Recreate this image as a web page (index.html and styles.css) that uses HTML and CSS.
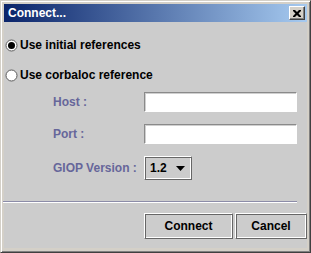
FILE: index.html
```html
<!DOCTYPE html>
<html lang="en">
<head>
    <meta charset="UTF-8">
    <title>Connect...</title>
    <link rel="stylesheet" href="styles.css">
</head>
<body>
    <div class="window">
        <div class="titlebar">
            <span class="title">Connect...</span>
            <span class="close">
                <svg width="8" height="7" viewBox="0 0 8 7">
                    <path d="M0 0h2l2 2 2-2h2v1l-2.5 2.5 2.5 2.5v1h-2l-2-2-2 2h-2v-1l2.5-2.5-2.5-2.5z" fill="#000"/>
                </svg>
            </span>
        </div>

        <div class="content">
            <div class="options">
                <div class="radio-row">
                    <svg class="radio" width="13" height="13" viewBox="0 0 13 13">
                        <circle cx="6.5" cy="6.5" r="5.5" fill="#fff" stroke="#5a5a5a"/>
                        <circle cx="6.5" cy="6.5" r="3.5" fill="#000"/>
                    </svg>
                    <span>Use initial references</span>
                </div>
                <div class="radio-row">
                    <svg class="radio" width="13" height="13" viewBox="0 0 13 13">
                        <circle cx="6.5" cy="6.5" r="5.5" fill="#fff" stroke="#5a5a5a"/>
                    </svg>
                    <span>Use corbaloc reference</span>
                </div>
            </div>

            <div class="form">
                <span class="field-label">Host :</span>
                <div class="input"></div>
                <span class="field-label">Port :</span>
                <div class="input"></div>
                <span class="field-label">GIOP Version :</span>
                <div class="combo">
                    <span>1.2</span>
                    <svg width="9" height="5" viewBox="0 0 9 5"><polygon points="0 0, 9 0, 4.5 5" fill="#000"/></svg>
                </div>
            </div>

            <div class="separator"></div>

            <div class="buttons">
                <div class="button connect">Connect</div>
                <div class="button cancel">Cancel</div>
            </div>
        </div>
    </div>
</body>
</html>
```

FILE: styles.css
```css
body {
    margin: 0;
    font-family: "Liberation Sans", Arial, sans-serif;
    background-color: #d4d0c8;
}
.window {
    width: 311px;
    height: 253px;
    box-sizing: border-box;
    background-color: #d4d0c8;
    border: 1px solid;
    border-color: #d4d0c8 #404040 #404040 #d4d0c8;
    box-shadow: inset 1px 1px 0 #fff, inset -1px -1px 0 #808080;
    padding: 3px 3px 0 3px;
}
.titlebar {
    height: 18px;
    display: flex;
    align-items: center;
    justify-content: space-between;
    padding: 0 2px 0 4px;
    background: linear-gradient(to right, #0a246a, #a6caf0);
    color: #fff;
    font-size: 12px;
    font-weight: bold;
}
.close {
    width: 16px;
    height: 14px;
    box-sizing: border-box;
    background-color: #d4d0c8;
    border: 1px solid;
    border-color: #fff #404040 #404040 #fff;
    box-shadow: inset -1px -1px 0 #808080;
    display: flex;
    align-items: center;
    justify-content: center;
}
.content {
    height: 226px;
    background-color: #cccccc;
    box-sizing: border-box;
    padding-top: 16px;
}
.options {
    display: flex;
    flex-direction: column;
    gap: 16px;
    padding-left: 1px;
}
.radio-row {
    display: flex;
    align-items: center;
    gap: 2px;
    height: 14px;
    font-size: 12px;
    font-weight: bold;
    color: #000;
}
.form {
    display: grid;
    grid-template-columns: 91px 153px;
    row-gap: 12px;
    align-items: center;
    margin-top: 10px;
    padding-left: 49px;
}
.field-label {
    font-size: 12px;
    font-weight: bold;
    color: #66669a;
}
.input {
    height: 20px;
    box-sizing: border-box;
    background-color: #fff;
    border: 1px solid;
    border-color: #8a8a8a #fff #fff #8a8a8a;
    box-shadow: inset 1px 1px 0 #cfcfcf;
}
.combo {
    width: 48px;
    height: 24px;
    box-sizing: border-box;
    border: 1px solid;
    border-color: #fff #666 #666 #fff;
    box-shadow: inset 1px 1px 0 #666, inset -1px -1px 0 #fff;
    display: flex;
    align-items: center;
    gap: 9px;
    padding-left: 5px;
    font-size: 12px;
    font-weight: bold;
}
.separator {
    margin: 21px 10px 0 -1px;
    height: 1px;
    background-color: #8c8ca8;
    border-bottom: 1px solid #fff;
}
.buttons {
    display: flex;
    justify-content: flex-end;
    gap: 2px;
    margin-top: 10px;
}
.button {
    height: 26px;
    box-sizing: border-box;
    border: 1px solid;
    border-color: #fff #666 #666 #fff;
    box-shadow: inset 1px 1px 0 #666, inset -1px -1px 0 #fff;
    display: flex;
    align-items: center;
    justify-content: center;
    font-size: 12px;
    font-weight: bold;
}
.connect {
    width: 89px;
}
.cancel {
    width: 72px;
}
```
